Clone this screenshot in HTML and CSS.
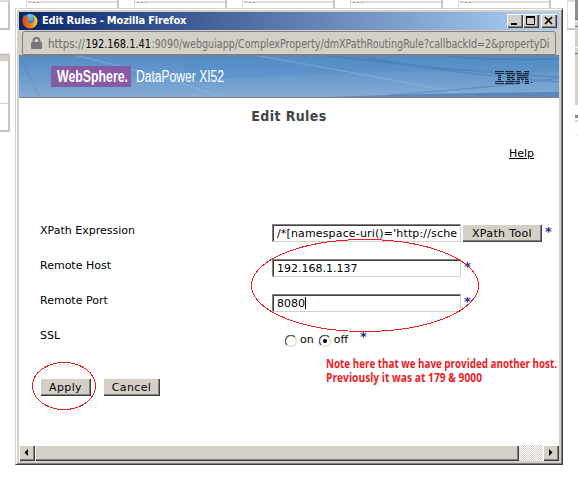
FILE: index.html
```html
<!DOCTYPE html>
<html lang="en">
<head>
<meta charset="utf-8">
<title>Edit Rules</title>
<link rel="stylesheet" href="styles.css">
</head>
<body>
<svg class="backdrop" width="578" height="492" aria-hidden="true">
  <path fill="none" stroke="#dedede" d="M26.500 0V8M134.500 0V8M242.500 0V8M350.500 0V8M458.500 0V8M567.500 0V29"/>
  <path fill="none" stroke="#b4b4b4" stroke-width="1.500" d="M0 29H9V0M118 0V8M226 0V8M334 0V8M442 0V8M550 0V8M567 29H575M0 54.500H9V131H0"/>
  <path stroke="#dedad4" stroke-width="2" d="M0 1H9M27 2H117M135 2H225M243 2H333M351 2H441M459 2H549M567 1H575"/>
  <path stroke="#d99" stroke-dasharray="2 2" d="M29 2.500h10M137 2.500h10M245 2.500h10M353 2.500h10M461 2.500h10"/>
  <path fill="#d4d0c8" d="M0 55h8v6H0zM0 103h8v1H0zM575 20h3v85h-3z"/>
  <path fill="#8f8f8f" d="M575 0h3v19h-3z"/>
  <path stroke="#fff" d="M575 21.500h3M575 47.500h3"/>
  <path stroke="#77736d" d="M575 19.500h3M575 26.500h3M575 53.500h3"/>
  <path fill="#6c8fca" d="M575 115h3v3h-3z"/>
  <path fill="#d8d5d1" d="M575 120h3v2h-3z"/>
  <path fill="#fbecee" d="M575 134h3v2h-3z"/>
</svg>
<main class="window">
  <header class="titlebar">
    <svg class="firefox" width="16" height="16" viewBox="0 0 16 16">
      <defs><radialGradient id="globe" cx=".5" cy=".2" r=".7"><stop stop-color="#6dd0ed"/><stop offset="1" stop-color="#175a9a"/></radialGradient>
      <linearGradient id="fox" x1="0" x2="1"><stop stop-color="#d94c13"/><stop offset=".55" stop-color="#f27b17"/><stop offset="1" stop-color="#ffd23c"/></linearGradient></defs>
      <circle cx="8" cy="7.500" r="6.800" fill="url(#globe)"/>
      <path fill="url(#fox)" d="M2 2l2 1.500 3 .2-1.800 2 2.800.8-2 1.500c.2 2 2.200 3 4.200 1.800 2-.8 2.500-2.500 1.800-4.200L10.500 2c3 .5 5 3 5 6a7.500 7.500 0 0 1-15 .2C.3 5.500 1 4 2 2z"/>
    </svg>
    <h1 class="caption">Edit Rules - Mozilla Firefox</h1>
    <div class="controls">
      <svg class="ctl" viewBox="0 0 16 14"><path fill="#000" d="M4 9h6v2H4z"/></svg>
      <svg class="ctl" viewBox="0 0 16 14"><path fill="none" stroke="#000" d="M3.500 3v7.500h8V3M3 2.500h9M3 3.500h9"/></svg>
      <svg class="ctl close" viewBox="0 0 16 14"><path fill="none" stroke="#000" stroke-width="1.700" d="M4 3l7 7M11 3l-7 7"/></svg>
    </div>
  </header>
  <div class="addressbar">
    <svg class="lock" width="11" height="12" viewBox="0 0 11 12"><path fill="none" stroke="#777" stroke-width="2" d="M2.500 6V4a3 3 0 0 1 6 0v2"/><rect y="5" width="11" height="7" rx="1" fill="#777"/></svg>
    <svg class="url" width="504" height="20">
      <text x="0" y="15" textLength="37" lengthAdjust="spacingAndGlyphs">https://</text>
      <text class="host" x="37.500" y="15" textLength="65.500" lengthAdjust="spacingAndGlyphs">192.168.1.41</text>
      <text x="103.500" y="15" textLength="398" lengthAdjust="spacingAndGlyphs">:9090/webguiapp/ComplexProperty/dmXPathRoutingRule?callbackId=2&amp;propertyDi</text>
    </svg>
  </div>
  <svg class="banner" width="540" height="43" viewBox="0 0 540 43">
    <defs><linearGradient id="sky" x2="0" y2="1"><stop stop-color="#568cc4"/><stop offset=".4" stop-color="#6397cc"/><stop offset="1" stop-color="#87add6"/></linearGradient></defs>
    <rect width="540" height="43" fill="url(#sky)"/>
    <path fill="#4c86c4" opacity=".25" d="M165 0H540V17Q360 12 165 27z"/>
    <g fill="none">
      <path stroke="#a4c8e7" opacity=".3" stroke-width="1.500" d="M55 0Q150 22 199 41M235 0Q350 20 460 42"/>
      <path stroke="#34669f" opacity=".12" stroke-width="2" d="M0 0L20 41"/>
      <path stroke="#34669f" opacity=".3" stroke-width="1.500" d="M305 0Q430 16 540 22M350 3Q430 18 540 27M370 40Q470 33 540 23M420 0Q470 6 540 4"/>
    </g>
    <path fill="#416fa8" opacity=".6" d="M310 42Q420 38 540 37V42z"/>
    <path fill="#808080" d="M0 0h540v1H0zM0 42h540v1H0z"/>
    <rect x="32" y="11" width="80" height="21" fill="#875aa4"/>
    <text class="brand strong" x="38" y="27" textLength="71" lengthAdjust="spacingAndGlyphs">WebSphere.</text>
    <text class="brand" x="117" y="27" textLength="88" lengthAdjust="spacingAndGlyphs">DataPower XI52</text>
    <path fill="#142334" opacity=".25" d="M479 18h3v9h-3zM488 16h7v13h-7zM498 16h4l2 4 2-4h4v13h-4v-6l-2 3-3-3v6h-3z"/>
    <path stroke="#142334" opacity=".95" d="M476 16.500h9M486 16.500h9M497 16.500h5M505 16.500h5M476 18.500h9M486 18.500h10M497 18.500h6M504 18.500h6M479 20.500h3M488 20.500h3M493 20.500h3M498 20.500h11M479 22.500h3M488 22.500h7M498 22.500h11M479 24.500h3M488 24.500h3M493 24.500h3M498 24.500h3M502 24.500h3M506 24.500h3M476 26.500h9M486 26.500h10M496 26.500h5M503 26.500h1M506 26.500h4M476 28.500h9M486 28.500h9M496 28.500h5M506 28.500h4M512 27.500h1"/>
  </svg>
  <section class="page">
    <h2 class="heading">Edit Rules</h2>
    <div class="helprow"><a class="help">Help</a></div>
    <div class="form">
      <div class="row"><label class="label">XPath Expression</label><div class="field expr">/*[namespace-uri()='http://sche</div><div class="button xpath">XPath Tool</div><span class="star">*</span></div>
      <div class="row"><label class="label">Remote Host</label><div class="field">192.168.1.137</div><span class="star">*</span></div>
      <div class="row"><label class="label">Remote Port</label><div class="field">8080<i class="caret"></i></div><span class="star">*</span></div>
      <div class="row"><label class="label">SSL</label><div class="choices">
        <svg class="radio" viewBox="0 0 12 12"><circle cx="6" cy="6" r="5.300" fill="#fff" stroke="#d4d0c8"/><path fill="none" stroke="#555" stroke-width="1.300" d="M2 10A5.200 5.200 0 0 1 10 2"/></svg><span class="opt">on</span>
        <svg class="radio" viewBox="0 0 12 12"><circle cx="6" cy="6" r="5.300" fill="#fff" stroke="#d4d0c8"/><path fill="none" stroke="#555" stroke-width="1.300" d="M2 10A5.200 5.200 0 0 1 10 2"/><circle cx="6" cy="6" r="2.100"/></svg><span class="opt">off</span>
      </div><span class="star ssl">*</span></div>
    </div>
    <div class="actions"><div class="button apply">Apply</div><div class="button cancel">Cancel</div></div>
  </section>
  <footer class="scrollbar">
    <svg class="arrow" viewBox="0 0 16 16"><path d="M9 4v7L5.500 7.500z"/></svg>
    <div class="thumb"></div><div class="track"></div>
    <svg class="arrow" viewBox="0 0 16 16"><path d="M6 4v7l3.500-3.500z"/></svg>
  </footer>
</main>
<svg class="marks" width="578" height="492">
  <g fill="none" stroke="#ed1c24" shape-rendering="crispEdges"><ellipse cx="365" cy="285.500" rx="113.500" ry="46"/><ellipse cx="64" cy="386" rx="31.500" ry="23.500"/></g>
  <text x="326" y="368" textLength="231" lengthAdjust="spacingAndGlyphs">Note here that we have provided another host.</text>
  <text x="326" y="382" textLength="156" lengthAdjust="spacingAndGlyphs">Previously it was at 179 &amp; 9000</text>
</svg>
</body>
</html>
```
FILE: styles.css
```css
* { box-sizing: border-box; }
body { margin: 0; width: 578px; height: 492px; overflow: hidden; position: relative; background: #fff; font-family: "DejaVu Sans", sans-serif; font-size: 11px; color: #000; }
.backdrop, .marks { position: absolute; left: 0; top: 0; }
.marks { pointer-events: none; }
.marks text { font: bold 11.500px "Open Sans", sans-serif; fill: #ed1c24; }
.window { position: absolute; left: 15px; top: 8px; width: 548px; height: 457px; display: flex; flex-direction: column; padding: 3px; background: #d4d0c8; border: 1px solid #d4d0c8; border-right-color: #404040; border-bottom-color: #404040; box-shadow: inset 1px 1px #fff, inset -1px -1px #808080; }
.titlebar { width: 540px; height: 18px; flex: none; display: flex; align-items: center; background: linear-gradient(90deg, #0a246a, #a6caf0 95%); padding: 0 2px 0 3px; }
.firefox { flex: none; }
.caption { margin: 0 0 0 4px; font: bold 11px/18px "DejaVu Sans Condensed", "DejaVu Sans", sans-serif; font-stretch: condensed; letter-spacing: -.17px; color: #fff; white-space: nowrap; }
.controls { display: flex; margin-left: auto; }
.ctl, .button, .arrow, .thumb { background: #d4d0c8; box-shadow: inset 1px 1px #fff, inset -1px -1px #404040, inset -2px -2px #808080; }
.ctl { width: 16px; height: 14px; }
.ctl.close { margin-left: 2px; }
.addressbar { flex: none; margin: 1px 0 0 3px; width: 534px; height: 24px; display: flex; align-items: center; border: 1px solid #808080; border-radius: 3px 3px 1px 1px; padding-left: 8px; }
.lock { flex: none; }
.url { margin-left: 6px; flex: none; }
.url text { font: 12px "DejaVu Sans Condensed", "DejaVu Sans", sans-serif; font-stretch: condensed; fill: #716e69; }
.url .host { fill: #000; }
.banner { flex: none; display: block; }
.brand { font: 16px "Liberation Sans", sans-serif; fill: #fff; }
.brand.strong { font-weight: bold; }
.page { width: 540px; height: 347px; flex: none; background: #fff; }
.heading { margin: 0; padding-top: 8px; font: bold 14px/20px "DejaVu Sans", sans-serif; font-stretch: condensed; letter-spacing: .4px; color: #444; text-align: center; }
.helprow { height: 34px; padding: 20px 25px 0 0; text-align: right; line-height: 16px; }
.help { text-decoration: underline; }
.form { margin-top: 54px; padding-left: 21px; }
.row { height: 35px; display: flex; align-items: flex-start; padding-top: 10px; }
.label { width: 232px; line-height: 14px; flex: none; }
.field { width: 189px; height: 18px; flex: none; border: 1px solid; border-color: #808080 #d4d0c8 #d4d0c8 #808080; box-shadow: inset 1px 1px #404040; padding: 1px 3px 0 4px; line-height: 16px; white-space: nowrap; overflow: hidden; }
.expr { letter-spacing: .15px; }
.caret { display: inline-block; width: 1px; height: 12px; background: #000; vertical-align: -2px; }
.button { height: 18px; text-align: center; line-height: 19px; letter-spacing: .35px; }
.xpath { width: 80px; margin-left: 1px; }
.star { color: #2a2a9c; font-size: 13px; font-weight: bold; line-height: 16px; margin-left: 3px; }
.choices { display: flex; width: 80px; padding: 6px 0 0 13px; }
.radio { width: 12px; height: 12px; flex: none; }
.radio + .opt + .radio { margin-left: -1px; }
.opt { line-height: 10px; margin: 0 6px 0 3px; }
.ssl { margin-left: 8px; }
.actions { display: flex; gap: 12px; margin: 24px 0 0 21px; }
.apply { width: 51px; }
.cancel { width: 57px; }
.scrollbar { width: 540px; height: 16px; flex: none; display: flex; }
.arrow { width: 16px; height: 16px; flex: none; }
.thumb { width: 484px; }
.track { flex: 1; background: conic-gradient(#d4d0c8 25%, #fff 0 50%, #d4d0c8 0 75%, #fff 0) 0 0 / 2px 2px; }
```
